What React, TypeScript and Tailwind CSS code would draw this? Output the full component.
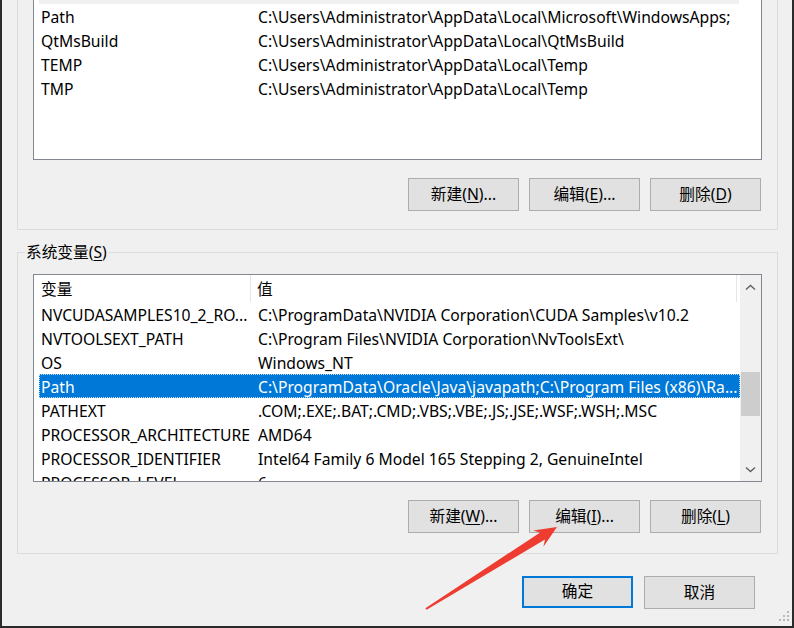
import type { ReactNode } from 'react'

const font = { fontFamily: '"Noto Sans", "Noto Sans CJK SC", sans-serif' }

const userVars = [
  ['Path', 'C:\\Users\\Administrator\\AppData\\Local\\Microsoft\\WindowsApps;'],
  ['QtMsBuild', 'C:\\Users\\Administrator\\AppData\\Local\\QtMsBuild'],
  ['TEMP', 'C:\\Users\\Administrator\\AppData\\Local\\Temp'],
  ['TMP', 'C:\\Users\\Administrator\\AppData\\Local\\Temp'],
]

const sysVars = [
  ['NVCUDASAMPLES10_2_RO...', 'C:\\ProgramData\\NVIDIA Corporation\\CUDA Samples\\v10.2'],
  ['NVTOOLSEXT_PATH', 'C:\\Program Files\\NVIDIA Corporation\\NvToolsExt\\'],
  ['OS', 'Windows_NT'],
  ['Path', 'C:\\ProgramData\\Oracle\\Java\\javapath;C:\\Program Files (x86)\\Ra...'],
  ['PATHEXT', '.COM;.EXE;.BAT;.CMD;.VBS;.VBE;.JS;.JSE;.WSF;.WSH;.MSC'],
  ['PROCESSOR_ARCHITECTURE', 'AMD64'],
  ['PROCESSOR_IDENTIFIER', 'Intel64 Family 6 Model 165 Stepping 2, GenuineIntel'],
  ['PROCESSOR_LEVEL', '6'],
]

function Btn({ children, primary }: { children: ReactNode; primary?: boolean }) {
  return (
    <button
      className={
        primary
          ? 'flex h-[32px] w-[111px] items-center justify-center border-2 border-[#0078d7] bg-[#e1e1e1] text-black'
          : 'flex h-[33px] w-[111px] items-center justify-center border border-[#adadad] bg-[#e1e1e1] text-black'
      }
    >
      {children}
    </button>
  )
}

function Key({ k }: { k: string }) {
  return <span className="underline underline-offset-2">{k}</span>
}

function Row({ name, value, selected }: { name: string; value: string; selected?: boolean }) {
  return (
    <div
      className={
        selected
          ? 'flex h-[24px] items-center border border-dotted border-[#bcd9f5] bg-[#0078d7] pt-[3px] text-white'
          : 'flex h-[24px] items-center border border-transparent pt-[3px] text-black'
      }
    >
      <div className="w-[218px] shrink-0 overflow-hidden whitespace-nowrap pl-[1px]">{name}</div>
      <div className="overflow-hidden whitespace-nowrap">{value}</div>
    </div>
  )
}

function Chevron({ down }: { down?: boolean }) {
  return (
    <svg width="11" height="7" viewBox="0 0 11 7" fill="none">
      <path
        d={down ? 'M1 1.5 L5.5 5.5 L10 1.5' : 'M1 5.5 L5.5 1.5 L10 5.5'}
        stroke="#606060"
        strokeWidth="1.4"
      />
    </svg>
  )
}

export default function App() {
  return (
    <div
      className="relative h-[628px] w-[794px] overflow-hidden border-b-2 border-l-2 border-r-2 border-[#2b2b2b] bg-[#f0f0f0] text-[15.7px] text-black"
      style={font}
    >
      {/* user variables group (top part scrolled off) */}
      <div className="ml-[15px] w-[761px] border-b border-l border-r border-[#dcdcdc] pb-[18px] pl-[15px]">
        <div className="h-[160px] w-[729px] border-b border-l border-r border-[#828790] bg-white pl-[5px]">
          <div className="h-[4px] w-[700px] bg-[#f0f0f0]" />
          {userVars.map(([n, v]) => (
            <Row key={n} name={n} value={v} />
          ))}
        </div>
        <div className="mt-[18px] flex w-[728px] justify-end gap-[10px]">
          <Btn>
            新建(<Key k="N" />)...
          </Btn>
          <Btn>
            编辑(<Key k="E" />)...
          </Btn>
          <Btn>
            删除(<Key k="D" />)
          </Btn>
        </div>
      </div>

      {/* system variables group */}
      <fieldset className="ml-[15px] mt-[12px] w-[761px] border border-[#dcdcdc] pb-[20px] pl-[15px]">
        <legend className="-ml-[8px] px-[1px] leading-[20px]">
          系统变量(<Key k="S" />)
        </legend>
        <div className="mt-[12px] flex h-[208px] w-[729px] overflow-hidden border border-[#828790] bg-white">
          <div className="flex-1 overflow-hidden">
            <div className="flex h-[27px] items-center">
              <div className="h-full w-[217px] border-r border-[#e5e5e5] pl-[7px] pt-[2px] leading-[25px]">变量</div>
              <div className="h-full w-[486px] border-r border-[#e5e5e5] pl-[6px] pt-[2px] leading-[25px]">值</div>
            </div>
            <div className="pl-[5px]">
              {sysVars.map(([n, v]) => (
                <Row key={n} name={n} value={v} selected={n === 'Path'} />
              ))}
            </div>
          </div>
          <div className="flex w-[21px] shrink-0 flex-col bg-[#f0f0f0]">
            <div className="flex h-[24px] items-center justify-center">
              <Chevron />
            </div>
            <div className="flex-1 px-[1px]">
              <div className="mt-[73px] h-[44px] bg-[#cdcdcd]" />
            </div>
            <div className="flex h-[24px] items-center justify-center">
              <Chevron down />
            </div>
          </div>
        </div>
        <div className="mt-[18px] flex w-[728px] justify-end gap-[10px]">
          <Btn>
            新建(<Key k="W" />)...
          </Btn>
          <Btn>
            编辑(<Key k="I" />)...
          </Btn>
          <Btn>
            删除(<Key k="L" />)
          </Btn>
        </div>
      </fieldset>

      {/* dialog buttons */}
      <div className="mt-[22px] flex justify-end gap-[11px] pr-[37px]">
        <Btn primary>确定</Btn>
        <Btn>取消</Btn>
      </div>

      {/* size grip */}
      <svg className="absolute bottom-[4px] right-[2px]" width="12" height="12" viewBox="0 0 12 12">
        {[
          [9, 1],
          [9, 5],
          [5, 5],
          [9, 9],
          [5, 9],
          [1, 9],
        ].map(([x, y]) => (
          <rect key={`${x}-${y}`} x={x} y={y} width="2" height="2" fill="#b8b8b8" />
        ))}
      </svg>

      {/* red annotation arrow */}
      <svg className="pointer-events-none absolute left-0 top-0" width="794" height="628" viewBox="-2 0 794 628">
        <polygon
          points="421.4,608.3 536.2,532.4 529.2,530.6 553,527 539.4,546.8 541,539.6 422.6,609.7"
          fill="#ee3c31"
        />
      </svg>
    </div>
  )
}
